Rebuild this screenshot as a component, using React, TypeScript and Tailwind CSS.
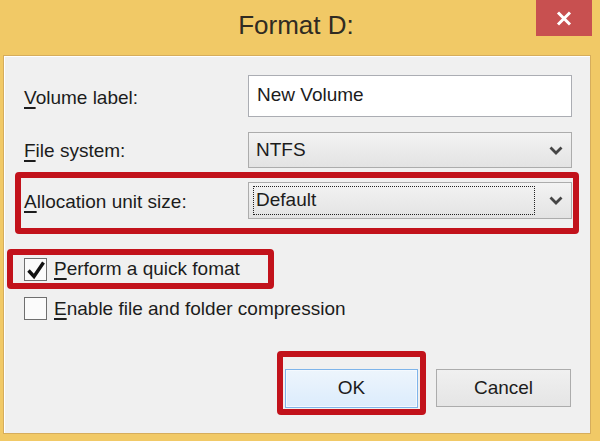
import React from 'react';

function Chevron() {
  return (
    <svg width="14" height="9" viewBox="0 0 14 9" className="shrink-0">
      <path d="M1.5 1.5 7 7l5.5-5.5" fill="none" stroke="#454545" strokeWidth="2.8" />
    </svg>
  );
}

function Key({ c }: { c: string }) {
  return <span className="underline underline-offset-[3px] decoration-[1.5px]">{c}</span>;
}

function Select({ value, focused }: { value: string; focused?: boolean }) {
  return (
    <div className="w-[324px] h-full flex items-center border border-[#acacac] bg-gradient-to-b from-[#f3f3f3] to-[#e3e3e3] pl-[4px]">
      <div
        className={`flex-1 h-[29px] flex items-center pl-[2px] border ${
          focused ? 'border-dotted border-[#222]' : 'border-transparent'
        }`}
      >
        {value}
      </div>
      <div className="w-[36px] flex justify-end pr-[8px]">
        <Chevron />
      </div>
    </div>
  );
}

function CheckBox({ checked }: { checked?: boolean }) {
  return (
    <div className="w-[23px] h-[23px] shrink-0 border border-[#6f6f6f] bg-[#fbfbfb] flex items-center justify-center">
      {checked && (
        <svg width="21" height="21" viewBox="0 0 21 21">
          <path d="M3.5 11.5 9 17.5 18.5 3.5" fill="none" stroke="#111" strokeWidth="3.4" />
        </svg>
      )}
    </div>
  );
}

export default function App() {
  return (
    <div className="w-[600px] h-[441px] bg-[#f1c966] flex flex-col font-['Liberation_Sans',Arial,sans-serif] text-[19px] text-[#1c1c1c] overflow-hidden">
      {/* title bar */}
      <div className="h-[55px] shrink-0 grid grid-cols-[1fr_auto_1fr] pr-[8px]">
        <div />
        <div className="pt-[12px] text-[26px] leading-none text-[#302b22]">Format D:</div>
        <div className="flex justify-end items-start">
          <button className="w-[56px] h-[36px] bg-[#c85050] flex items-center justify-center">
            <svg width="16" height="15" viewBox="0 0 16 15">
              <path d="M2 1.5 14 13.5M14 1.5 2 13.5" stroke="#fff" strokeWidth="3" />
            </svg>
          </button>
        </div>
      </div>

      {/* body */}
      <div className="ml-[3px] mr-[9px] h-[379px] shrink-0 border border-[#d6ad5c] bg-[#f0f0f0] shadow-[inset_1px_1px_0_#ffffff] flex flex-col">
        <div className="mt-[19px] h-[42px] flex items-center pl-[20px]">
          <div className="w-[224px] shrink-0 pt-[4px]">
            <Key c="V" />olume label:
          </div>
          <div className="w-[324px] h-full border border-[#abadb3] bg-white flex items-center pl-[8px] pb-[2px]">
            New Volume
          </div>
        </div>

        <div className="mt-[15px] h-[36px] flex items-center pl-[20px]">
          <div className="w-[224px] shrink-0 pt-[2px]">
            <Key c="F" />ile system:
          </div>
          <Select value="NTFS" />
        </div>

        <div className="mt-[4px] ml-[11px] w-[564px] h-[62px] border-[6px] border-[#c2121b] rounded-[4px] pt-[4px] pl-[3px]">
          <div className="h-[37px] flex items-center">
            <div className="w-[224px] shrink-0 pt-[3px]">
              <Key c="A" />llocation unit size:
            </div>
            <Select value="Default" focused />
          </div>
        </div>

        <div className="mt-[15px] ml-[3px] w-[267px] h-[40px] border-[6px] border-[#c2121b] rounded-[4px] flex items-center pl-[11px] gap-[7px]">
          <CheckBox checked />
          <div className="pt-[1px]">
            <Key c="P" />erform a quick fomat
          </div>
        </div>

        <div className="mt-[8px] h-[23px] flex items-center pl-[20px] gap-[7px]">
          <CheckBox />
          <div className="pt-[1px]">
            <Key c="E" />nable file and folder compression
          </div>
        </div>

        <div className="mt-[31px] flex justify-end items-end pr-[19px]">
          <div className="w-[149px] h-[64px] border-[6px] border-[#c2121b] rounded-[4px] flex items-end justify-center pb-[1px]">
            <button className="w-[133px] h-[39px] border border-[#7eb4ea] bg-gradient-to-b from-[#edf5fc] to-[#dcecfc] shadow-[inset_0_0_0_1px_#f4f9fe]">
              OK
            </button>
          </div>
          <button className="ml-[10px] mb-[8px] w-[135px] h-[38px] border border-[#acacac] bg-gradient-to-b from-[#f0f0f0] to-[#e5e5e5]">
            Cancel
          </button>
        </div>
      </div>
    </div>
  );
}
